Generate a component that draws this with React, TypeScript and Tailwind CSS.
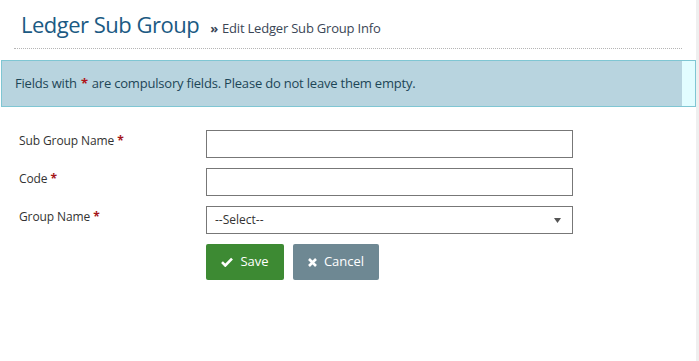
import React from 'react';

const fields = [
  { label: 'Sub Group Name', type: 'text' },
  { label: 'Code', type: 'text' },
  { label: 'Group Name', type: 'select' },
];

const App = () => {
  return (
    <div className="flex h-[361px] w-[699px] bg-white font-['Open_Sans',sans-serif]">
      <div className="flex-1">
        {/* header */}
        <div className="mx-[14px] flex items-baseline border-b border-dotted border-[#b5b5b5] pt-[8px] pb-[8px] pl-[7px]">
          <h1 className="text-[22px] leading-[32px] tracking-[-0.5px] text-[#1b5a83]">Ledger Sub Group</h1>
          <span className="ml-[11px] text-[13px] tracking-[-0.2px] text-[#3a4656]">
            <span className="mr-[4px] font-bold">»</span>Edit Ledger Sub Group Info
          </span>
        </div>

        {/* notice */}
        <div className="mt-[11px] ml-[1px] flex h-[47px] border border-[#7fc6d3] bg-[#b8d4df]">
          <p className="flex flex-1 items-center pl-[13px] text-[13px] tracking-[-0.2px] text-[#1d4657]">
            Fields with <span className="mx-[4px] font-bold text-[#b0141a]">*</span> are compulsory fields. Please do not leave them empty.
          </p>
          <div className="w-[13px] bg-[#e2fdff]" />
        </div>

        {/* form */}
        <div className="mt-[23px] flex flex-col gap-[10px] pl-[19px]">
          {fields.map((f, i) => (
            <div key={i} className="flex">
              <label className="w-[187px] pt-[2px] text-[12px] tracking-[-0.1px] text-[#333]">
                {f.label} <span className="font-bold text-[#a5161a]">*</span>
              </label>
              {f.type === 'select' ? (
                <div className="flex h-[28px] w-[367px] items-center justify-between border border-[#777] px-[8px] text-[12px] text-[#333]">
                  <span>--Select--</span>
                  <svg width="7" height="5" viewBox="0 0 7 5" className="mr-[3px]">
                    <path d="M0 0 L7 0 L3.5 5 Z" fill="#555" />
                  </svg>
                </div>
              ) : (
                <input className="h-[28px] w-[367px] border border-[#777] px-[8px] text-[12px] outline-none" />
              )}
            </div>
          ))}
          <div className="flex gap-[9px] pl-[187px]">
            <button className="flex h-[36px] w-[78px] items-center justify-center gap-[7px] rounded-[2px] bg-[#3d8a33] text-[13px] text-white">
              <svg width="12" height="10" viewBox="0 0 12 10">
                <path d="M1 5.2 L4.3 8.5 L11 1.6" fill="none" stroke="#fff" strokeWidth="2.6" />
              </svg>
              Save
            </button>
            <button className="flex h-[36px] w-[86px] items-center justify-center gap-[7px] rounded-[2px] bg-[#6e8893] text-[13px] text-white">
              <svg width="9" height="9" viewBox="0 0 9 9">
                <path d="M1 1 L8 8 M8 1 L1 8" fill="none" stroke="#fff" strokeWidth="2.6" />
              </svg>
              Cancel
            </button>
          </div>
        </div>
      </div>
      <div className="w-[3px] bg-[#efefef]" />
    </div>
  );
};

export default App;
